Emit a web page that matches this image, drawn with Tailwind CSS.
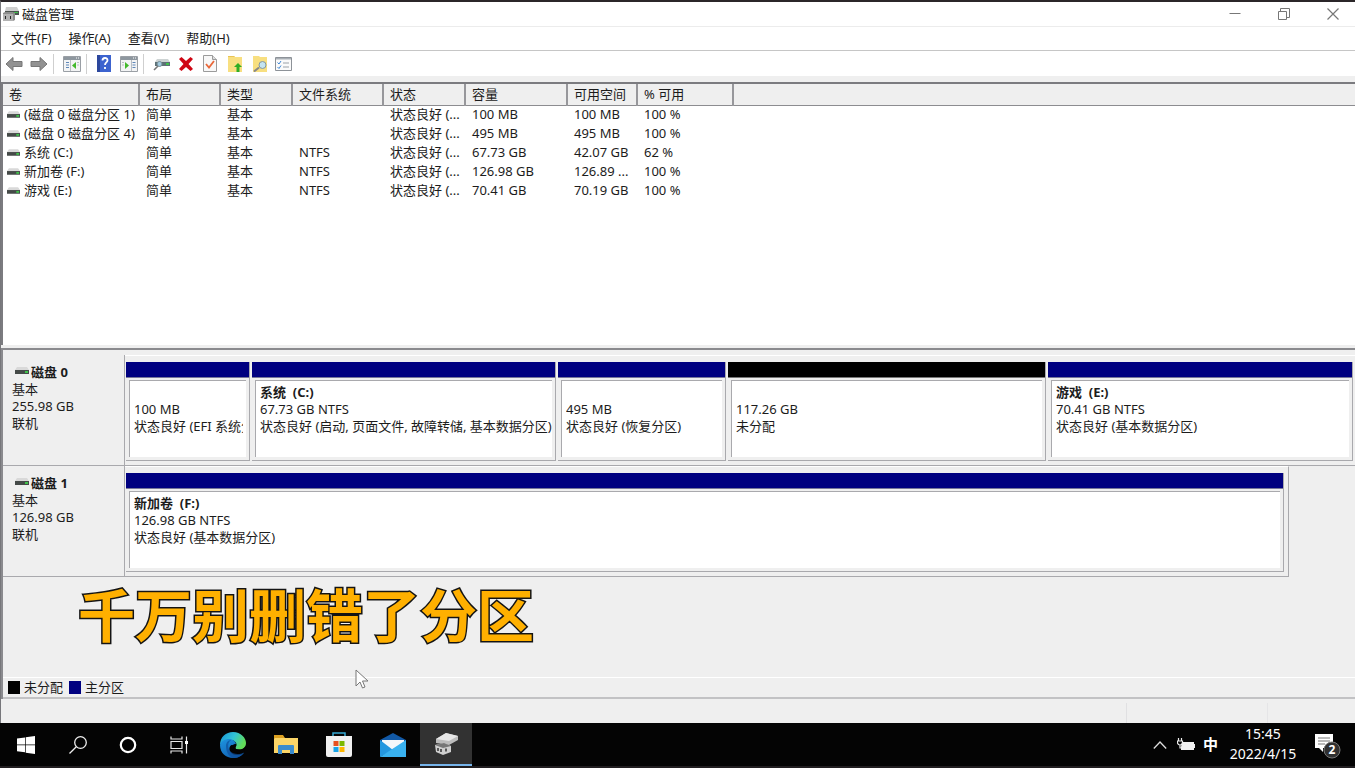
<!DOCTYPE html>
<html lang="zh-CN">
<head>
<meta charset="utf-8">
<title>磁盘管理</title>
<script src="https://cdn.jsdelivr.net/npm/@tailwindcss/browser@4"></script>
</head>
<body class="h-screen min-h-[640px] flex flex-col overflow-hidden relative bg-[#efefef] text-[#1c1c1c] text-[13px] leading-[17px] font-['Noto_Sans','Noto_Sans_CJK_SC',sans-serif]">
<svg class="hidden">
  <defs>
    <symbol id="drive" viewBox="0 0 14 9"><path d="M2 1h10l2 3H0z" fill="#d9d9d9"/><path d="M0 4h14v4H0z" fill="#454a48"/><path d="M10 5h3v2h-3z" fill="#3fc24a"/></symbol>
    <symbol id="pane" viewBox="0 0 18 16"><path d="M.5.5h17v15H.5z" fill="#f3f4f5" stroke="#9a9fa5"/><path d="M1 1h16v3H1z" fill="#8e979f"/><path d="M13 2h1M15 2h1" stroke="#fff"/></symbol>
  </defs>
</svg>

<main class="flex-1 min-h-0 flex flex-col border-t-2 border-t-[#2b2629] border-l border-l-[#77777b]">
  <header class="h-6 shrink-0 flex items-center bg-white">
    <svg class="w-[17px] h-[16px] ml-px shrink-0" viewBox="0 0 17 16"><path d="M4 1h11l2 4H3z" fill="#cfcfcf"/><path d="M3 5h14v4H3z" fill="#4c5350"/><path d="M12 6h4v1h-4z" fill="#3ec24a"/><path d="M1 7l2-1h8l2 1v7l-2 1H1z" fill="#8d8d8d"/><path d="M1 8h10v7H1z" fill="#b3b3b3"/><path d="M3 10h1v3H3zM8 10h1v3H8z" fill="#222"/></svg>
    <h1 class="ml-[3px] flex-1">磁盘管理</h1>
    <div class="flex text-[#777]">
      <button aria-label="最小化" class="w-[49px] h-6 flex items-center justify-center"><svg class="w-3 h-3" viewBox="0 0 12 12" fill="none" stroke="currentColor"><path d="M.5 5.5h11"/></svg></button>
      <button aria-label="还原" class="w-[49px] h-6 flex items-center justify-center"><svg class="w-3 h-3" viewBox="0 0 12 12" fill="none" stroke="currentColor"><path d="M.5 3.5h8v8h-8zM2.500 3v-2.500h9v9h-2.500"/></svg></button>
      <button aria-label="关闭" class="w-[49px] h-6 -mr-[2px] flex items-center justify-center"><svg class="w-3 h-3" viewBox="0 0 12 12" fill="none" stroke="currentColor" stroke-width="1.200"><path d="M.5.5l11 11M11.500.5l-11 11"/></svg></button>
    </div>
  </header>

  <nav class="h-[25px] shrink-0 flex items-center gap-[17px] pl-[10px] bg-white border-y border-t-[#ececec] border-b-[#c6c6c6]">
    <button>文件(F)</button><button>操作(A)</button><button>查看(V)</button><button>帮助(H)</button>
  </nav>

  <div class="h-[25px] shrink-0 flex items-center pl-1 bg-white" role="toolbar">
    <button aria-label="后退"><svg class="w-[18px] h-4" viewBox="0 0 18 16"><path d="M1 8l7-6.500v4h9v5H8v4z" fill="#929292" stroke="#777"/></svg></button>
    <button aria-label="前进" class="ml-[7px]"><svg class="w-[18px] h-4" viewBox="0 0 18 16"><path d="M17 8l-7-6.500v4H1v5h9v4z" fill="#929292" stroke="#777"/></svg></button>
    <span class="w-px h-5 ml-[5px] bg-[#cfcfcf]"></span>
    <button aria-label="显示控制台树" class="ml-[9px]"><svg class="w-[18px] h-4" viewBox="0 0 18 16"><use href="#pane"/><path d="M3 6.500h3M3 9h3M3 11.500h3" stroke="#5f87b8"/><path d="M7.500 4v11M14 6.500h2M14 9h2" stroke="#b9bec3"/><path d="M13 6v7L9 9.500z" fill="#43b92c"/></svg></button>
    <span class="w-px h-5 ml-[5px] bg-[#cfcfcf]"></span>
    <button aria-label="帮助" class="ml-[10px]"><svg class="w-[14px] h-[17px]" viewBox="0 0 14 17"><path d="M0 0h14v17H0z" fill="#3c63cf"/><path d="M0 0h3v17H0z" fill="#2c479d"/><path d="M5.500 5.500c0-3.300 5-3.300 5-.3 0 2.300-2.500 2-2.500 4.800M8 12v2" fill="none" stroke="#fff" stroke-width="1.800"/></svg></button>
    <button aria-label="显示操作窗格" class="ml-[9px]"><svg class="w-[18px] h-4" viewBox="0 0 18 16"><use href="#pane"/><path d="M12.500 6.500h3M12.500 9h3M12.500 11.500h3" stroke="#5f87b8"/><path d="M11.500 4v11M2 6.500h2M2 9h2" stroke="#b9bec3"/><path d="M5 6v7l4-3.500z" fill="#43b92c"/></svg></button>
    <span class="w-px h-5 ml-[5px] bg-[#cfcfcf]"></span>
    <button aria-label="刷新" class="ml-[9px]"><svg class="w-[17px] h-4" viewBox="0 0 17 16"><path d="M4 3h11l2 3H2z" fill="#cdd3d3"/><path d="M2 6h15v4H2z" fill="#5d7075"/><path d="M13 7h3v2h-3z" fill="#3ec24a"/><circle cx="6.500" cy="8" r="2.500" fill="#a3cbe0" stroke="#758c96"/><path d="M5 10l-4 4" stroke="#777" stroke-width="1.600"/></svg></button>
    <button aria-label="删除" class="ml-2"><svg class="w-4 h-4" viewBox="0 0 16 16"><path d="M1 3l2.500-2L8 5l4.500-4L15 3l-4.500 5 4.500 5-2.500 2L8 11l-4.500 4L1 13l4.500-5z" fill="#cf0613"/></svg></button>
    <button aria-label="属性" class="ml-[9px]"><svg class="w-[14px] h-[17px]" viewBox="0 0 14 17"><path d="M.5.5h9l4 4v12H.5z" fill="#f8f8f8" stroke="#9b9b9b"/><path d="M9.500.5v4h4" fill="#ddd" stroke="#9b9b9b"/><path d="M3 9l3 3.500L11 6" fill="none" stroke="#e9683a" stroke-width="1.800"/></svg></button>
    <button aria-label="向上" class="ml-[11px]"><svg class="w-[14px] h-[17px]" viewBox="0 0 14 17"><path d="M0 1h6l1 1h7v15H0z" fill="#f8df80"/><path d="M0 1h6l1 1H0z" fill="#e8c355"/><path d="M10 8l4 4h-2.500v5h-3v-5H6z" fill="#2fae24"/></svg></button>
    <button aria-label="查找" class="ml-[11px]"><svg class="w-[15px] h-[17px]" viewBox="0 0 15 17"><path d="M0 1h6l1 1h7v15H0z" fill="#f8df80"/><path d="M6 12.500l-5 4" stroke="#888" stroke-width="2"/><circle cx="9.500" cy="10" r="3.500" fill="#c4e4f2" stroke="#8397a1"/></svg></button>
    <button aria-label="任务列表" class="ml-[7px]"><svg class="w-[17px] h-[14px]" viewBox="0 0 17 14"><path d="M.5.5h16v13H.5z" fill="#fafafa" stroke="#8d9298"/><path d="M1 1h15v1.500H1z" fill="#a9afb5"/><path d="M2.500 5.500l1.500 1.500 2-3M2.500 10l1.500 1.500 2-3" fill="none" stroke="#3d86d6"/><path d="M8 6h6M8 10h6" stroke="#9aa1a8"/></svg></button>
  </div>

  <section class="mt-[6px] h-[263px] shrink-0 bg-white border-t-2 border-l-2 border-[#7b7b7f] overflow-hidden">
    <table class="w-full table-fixed border-collapse text-left">
      <colgroup><col class="w-[136px]"><col class="w-[81px]"><col class="w-[72px]"><col class="w-[91px]"><col class="w-[82px]"><col class="w-[102px]"><col class="w-[70px]"><col class="w-[96px]"><col></colgroup>
      <thead>
        <tr class="h-[21px] bg-[#efefef] border-b border-[#8c8c90] [&>th]:font-normal [&>th]:pl-[6px] [&>th]:whitespace-nowrap [&>th]:border-r-2 [&>th]:border-r-[#97979b]">
          <th>卷</th><th>布局</th><th>类型</th><th>文件系统</th><th>状态</th><th>容量</th><th>可用空间</th><th>% 可用</th><td></td>
        </tr>
      </thead>
      <tbody class="[&>tr]:h-[19px] [&_td]:pl-[7px] [&_td]:whitespace-nowrap [&_td:first-child]:pl-1">
        <tr><td><div class="flex items-center gap-1"><svg class="w-[13px] h-[9px] shrink-0"><use href="#drive"/></svg>(磁盘 0 磁盘分区 1)</div></td><td>简单</td><td>基本</td><td></td><td>状态良好 (...</td><td>100 MB</td><td>100 MB</td><td>100 %</td><td></td></tr>
        <tr><td><div class="flex items-center gap-1"><svg class="w-[13px] h-[9px] shrink-0"><use href="#drive"/></svg>(磁盘 0 磁盘分区 4)</div></td><td>简单</td><td>基本</td><td></td><td>状态良好 (...</td><td>495 MB</td><td>495 MB</td><td>100 %</td><td></td></tr>
        <tr><td><div class="flex items-center gap-1"><svg class="w-[13px] h-[9px] shrink-0"><use href="#drive"/></svg>系统 (C:)</div></td><td>简单</td><td>基本</td><td>NTFS</td><td>状态良好 (...</td><td>67.73 GB</td><td>42.07 GB</td><td>62 %</td><td></td></tr>
        <tr><td><div class="flex items-center gap-1"><svg class="w-[13px] h-[9px] shrink-0"><use href="#drive"/></svg>新加卷 (F:)</div></td><td>简单</td><td>基本</td><td>NTFS</td><td>状态良好 (...</td><td>126.98 GB</td><td>126.89 ...</td><td>100 %</td><td></td></tr>
        <tr><td><div class="flex items-center gap-1"><svg class="w-[13px] h-[9px] shrink-0"><use href="#drive"/></svg>游戏 (E:)</div></td><td>简单</td><td>基本</td><td>NTFS</td><td>状态良好 (...</td><td>70.41 GB</td><td>70.19 GB</td><td>100 %</td><td></td></tr>
      </tbody>
    </table>
  </section>
  <div class="h-[3px] shrink-0 bg-[#efefef]"></div>

  <section class="flex-1 min-h-0 flex flex-col border-t-2 border-[#8a8a8e] border-l-2">
    <div class="mt-[5px] flex h-[111px] shrink-0">
      <div class="w-[122px] shrink-0 pt-[9px] pl-[9px] border-r border-b border-[#a9a9ad]">
        <h2 class="flex items-center gap-[2px] font-bold pl-[3px]"><svg class="w-[14px] h-[9px] mb-1"><use href="#drive"/></svg>磁盘 0</h2>
        <p>基本</p><p>255.98 GB</p><p>联机</p>
      </div>
      <div class="flex-1 min-w-0 pt-[6px] pb-1 pl-px pr-[2px] border-t border-t-white border-b border-b-[#a9a9ad] flex gap-[2px] whitespace-nowrap">
        <article class="grow-[123] basis-0 min-w-0 flex flex-col border-r border-b border-[#a9a9ad]">
          <div class="h-4 bg-[#000080] border-b border-[#77779a]"></div>
          <div class="flex-1 mt-[2px] ml-[3px] mr-[3px] mb-[3px] bg-white border-t border-l border-[#a9a9ad] pl-1 pt-[3px] pr-[3px]"><div class="overflow-hidden"><h3 class="h-[17px]"></h3><p>100 MB</p><p>状态良好 (EFI 系统分区)</p></div></div>
        </article>
        <article class="grow-[303] basis-0 min-w-0 flex flex-col border-r border-b border-[#a9a9ad]">
          <div class="h-4 bg-[#000080] border-b border-[#77779a]"></div>
          <div class="flex-1 mt-[2px] ml-[3px] mr-[3px] mb-[3px] bg-white border-t border-l border-[#a9a9ad] pl-1 pt-[3px]"><div class="overflow-hidden"><h3 class="font-bold whitespace-pre">系统  (C:)</h3><p>67.73 GB NTFS</p><p>状态良好 (启动, 页面文件, 故障转储, 基本数据分区)</p></div></div>
        </article>
        <article class="grow-[167] basis-0 min-w-0 flex flex-col border-r border-b border-[#a9a9ad]">
          <div class="h-4 bg-[#000080] border-b border-[#77779a]"></div>
          <div class="flex-1 mt-[2px] ml-[3px] mr-[3px] mb-[3px] bg-white border-t border-l border-[#a9a9ad] pl-1 pt-[3px]"><div class="overflow-hidden"><h3 class="h-[17px]"></h3><p>495 MB</p><p>状态良好 (恢复分区)</p></div></div>
        </article>
        <article class="grow-[317] basis-0 min-w-0 flex flex-col border-r border-b border-[#a9a9ad]">
          <div class="h-4 bg-black border-b border-[#777]"></div>
          <div class="flex-1 mt-[2px] ml-[3px] mr-[3px] mb-[3px] bg-white border-t border-l border-[#a9a9ad] pl-1 pt-[3px]"><div class="overflow-hidden"><h3 class="h-[17px]"></h3><p>117.26 GB</p><p>未分配</p></div></div>
        </article>
        <article class="grow-[304] basis-0 min-w-0 flex flex-col border-r border-b border-[#a9a9ad]">
          <div class="h-4 bg-[#000080] border-b border-[#77779a]"></div>
          <div class="flex-1 mt-[2px] ml-[3px] mr-[3px] mb-[3px] bg-white border-t border-l border-[#a9a9ad] pl-1 pt-[3px]"><div class="overflow-hidden"><h3 class="font-bold whitespace-pre">游戏  (E:)</h3><p>70.41 GB NTFS</p><p>状态良好 (基本数据分区)</p></div></div>
        </article>
      </div>
    </div>
    <div class="flex h-[111px] shrink-0">
      <div class="w-[122px] shrink-0 pt-[9px] pl-[9px] border-r border-b border-[#a9a9ad]">
        <h2 class="flex items-center gap-[2px] font-bold pl-[3px]"><svg class="w-[14px] h-[9px] mb-1"><use href="#drive"/></svg>磁盘 1</h2>
        <p>基本</p><p>126.98 GB</p><p>联机</p>
      </div>
      <div class="flex-1 min-w-0 mr-[66px] pt-[6px] pb-1 pl-px pr-1 border-t border-t-white border-b border-b-[#a9a9ad] border-r border-r-[#a9a9ad] flex">
        <article class="flex-1 min-w-0 flex flex-col border-r border-b border-[#a9a9ad]">
          <div class="h-4 bg-[#000080] border-b border-[#77779a]"></div>
          <div class="flex-1 mt-[2px] ml-[3px] mr-[3px] mb-[3px] bg-white border-t border-l border-[#a9a9ad] pl-1 pt-[3px]"><h3 class="font-bold whitespace-pre">新加卷  (F:)</h3><p>126.98 GB NTFS</p><p>状态良好 (基本数据分区)</p></div>
        </article>
      </div>
    </div>
    <div class="flex-1"></div>
    <div class="h-[22px] shrink-0 flex items-center border-t border-t-white border-b-2 border-b-[#c2c2c4] pl-[5px]">
      <span class="w-3 h-[13px] bg-black"></span><span class="ml-1">未分配</span>
      <span class="w-3 h-[13px] bg-[#000080] ml-[6px]"></span><span class="ml-1">主分区</span>
    </div>
  </section>

  <footer class="h-[24px] shrink-0 flex justify-end pt-1">
    <span class="w-[141px] border-l border-[#e0e0e2]"></span><span class="w-[88px] border-l border-[#e5e5e7]"></span>
  </footer>
</main>

<div class="h-[45px] shrink-0 bg-[#040404] border-b-2 border-[#211e20] text-white flex items-stretch">
  <button aria-label="开始" class="w-[52px] flex items-center justify-center"><svg class="w-[18px] h-[18px]" viewBox="0 0 18 18" fill="#fff"><path d="M0 2.500l8-1v7H0zM8.700 1.300L18 0v8.500H8.700zM0 9.300h8v7l-8-1zM8.700 9.300H18V18l-9.300-1.300z"/></svg></button>
  <button aria-label="搜索" class="w-[51px] flex items-center justify-center"><svg class="w-[18px] h-[18px]" viewBox="0 0 18 18" fill="none" stroke="#eee" stroke-width="1.300"><circle cx="11.500" cy="6.500" r="5.800"/><path d="M7.300 10.700L.5 17.500"/></svg></button>
  <button aria-label="Cortana" class="w-[50px] flex items-center justify-center"><svg class="w-[18px] h-[18px]" viewBox="0 0 18 18" fill="none" stroke="#fff" stroke-width="2.200"><circle cx="9" cy="9" r="7.200"/></svg></button>
  <button aria-label="任务视图" class="w-[51px] flex items-center justify-center"><svg class="w-[18px] h-[18px]" viewBox="0 0 18 18" fill="none" stroke="#e8e8e8" stroke-width="1.200"><path d="M1 5.500h11v7H1zM1 .5v2.500h11V.5M1 17.500V15h11v2.500M16.500 .5v17"/><path d="M15 5h3v3h-3z" fill="#fff" stroke="none"/></svg></button>
  <button aria-label="Edge" class="w-[58px] flex items-center justify-center"><svg class="w-[26px] h-[26px]" viewBox="0 0 26 26"><defs><linearGradient id="eg" x1="0" x2="1" y1="0" y2=".4"><stop stop-color="#1690d8"/><stop offset=".55" stop-color="#32c4d6"/><stop offset="1" stop-color="#62dc58"/></linearGradient><linearGradient id="eb" x1="0" x2=".6" y1="0" y2="1"><stop stop-color="#1d93e0"/><stop offset="1" stop-color="#1264b4"/></linearGradient></defs><path d="M0 13C0 5 6 0 13 0c8 0 13 6 13 11 0 4-3 6.500-6.500 6.500-3 0-4.500-1-4-2 3-4-1-7.500-5-7.500C5 8 1 11 0 13z" fill="url(#eg)"/><path d="M0 13c1-4 5-6 9-6 4 0 7 2.500 7 6 0 1-.500 2-1 2.500-1-2.500-3.500-3.500-5-1-2 3.500 1 9 8 8.500 3 0 5-1.500 6-2.500C22 24 18 26 13 26 6 26 0 21 0 13z" fill="url(#eb)"/><path d="M6 14c0-4 3-6 5-6-3 2-4 7-1 11 3 3.500 9 4 14 1.500C22 24 18 26 13 26 8 24 6 19 6 14z" fill="#0e4f9b" opacity=".7"/><path d="M16 12c.5 2-.2 3-.8 4 .3 1 2 1.700 4.300 1.600 2.500 0 4.500-1 5.700-2.600L24 20c-3 1.500-6 1.500-8.500.5-3-1.300-4.500-4-3.500-6.500.7-1.500 2.500-2 4-2z" fill="#040404"/></svg></button>
  <button aria-label="文件资源管理器" class="w-12 flex items-center justify-center"><svg class="w-6 h-5" viewBox="0 0 24 20"><path d="M0 0h9l2 3h12v15H0z" fill="#dca021"/><path d="M1 3h23v15H0V4z" fill="#fbd567"/><path d="M4 19v-8q0-1 1-1h14q1 0 1 1v8h-4v-4H8v4z" fill="#3b8ccd"/></svg></button>
  <button aria-label="应用商店" class="w-[58px] flex items-center justify-center"><svg class="w-[26px] h-[26px]" viewBox="0 0 26 26"><path d="M7 5V1h12v4" fill="none" stroke="#36a9d3" stroke-width="1.500"/><path d="M0 4h26v19q0 2-2 2H2q-2 0-2-2z" fill="#f1f1f1"/><path d="M7.500 9h5v5h-5z" fill="#e8501f"/><path d="M13.500 9h5v5h-5z" fill="#7bb800"/><path d="M7.500 15h5v5h-5z" fill="#18a3e8"/><path d="M13.500 15h5v5h-5z" fill="#fdb600"/></svg></button>
  <button aria-label="邮件" class="w-[50px] flex items-center justify-center"><svg class="w-[26px] h-6" viewBox="0 0 26 24"><path d="M0 7l13-7 13 7v3H0z" fill="#1259a6"/><path d="M2 7h22v10H2z" fill="#f4f7fa"/><path d="M0 7l13 10L0 24z" fill="#2497df"/><path d="M26 7v17H0z" fill="#39b2f0"/></svg></button>
  <button aria-label="磁盘管理" class="w-[52px] ml-[2px] flex items-center justify-center bg-[#323232] border-b-2 border-[#76b4ea]"><svg class="w-6 h-[22px]" viewBox="0 0 24 22"><path d="M2 6l10-6 12 3v4l-9 5L2 10z" fill="#bcbcbc"/><path d="M2 6l10-6 12 3-9 5z" fill="#e6e6e6"/><path d="M1 12l9-2 7 3v6l-8 3-7-3z" fill="#cfcfcf"/><path d="M1 12l9-2 7 3-8 2z" fill="#777"/><path d="M4 15v3M7 16v3M12 15.500v3" stroke="#333" stroke-width="1.500"/></svg></button>
  <div class="flex-1"></div>
  <button aria-label="显示隐藏的图标" class="flex items-center"><svg class="w-[14px] h-2" viewBox="0 0 14 8" fill="none" stroke="#ddd" stroke-width="1.300"><path d="M.8 7.500L7 1l6.200 6.500"/></svg></button>
  <button aria-label="电源" class="flex items-center ml-[10px]"><svg class="w-[18px] h-[14px]" viewBox="0 0 18 14"><path d="M5 4h12v8H4V9" fill="#f2f2f2"/><path d="M17 6h1v4h-1z" fill="#eee"/><path d="M1.500 0v3M4.500 0v3M.5 3h5v2q-.500 2-2.500 2T.5 5zM3 7v3h2" fill="none" stroke="#eee" stroke-width="1.200"/></svg></button>
  <button class="ml-2 text-[15px] font-bold">中</button>
  <div class="ml-[10px] w-[70px] pb-px flex flex-col justify-center items-center text-[14px] leading-[20px] whitespace-nowrap"><time>15:45</time><time>2022/4/15</time></div>
  <button aria-label="通知：2" class="ml-4 mr-[13px] flex items-center"><svg class="w-7 h-7" viewBox="0 0 28 28"><path d="M1 3h18v14H9v4l-4-4H1z" fill="#fff"/><path d="M4 7h12M4 10h12M4 13h7" stroke="#777"/><circle cx="18" cy="19" r="8" fill="#303030" stroke="#777"/><text x="18" y="23" text-anchor="middle" font-size="12" font-weight="bold" fill="#fff">2</text></svg></button>
</div>

<p class="absolute left-[78px] top-[582px] text-[57px] leading-[60px] font-bold whitespace-nowrap text-[#ffb000] [-webkit-text-stroke:3px_#141414] [paint-order:stroke_fill] font-['Noto_Sans_CJK_SC',sans-serif]">千万别删错了分区</p>
<svg class="absolute left-[355px] top-[669px] w-[14px] h-[20px]" viewBox="0 0 14 20"><path d="M1 1v16l4-4 2.500 6 2.500-1-2.500-6H13z" fill="#fff" stroke="#777"/></svg>
</body>
</html>
